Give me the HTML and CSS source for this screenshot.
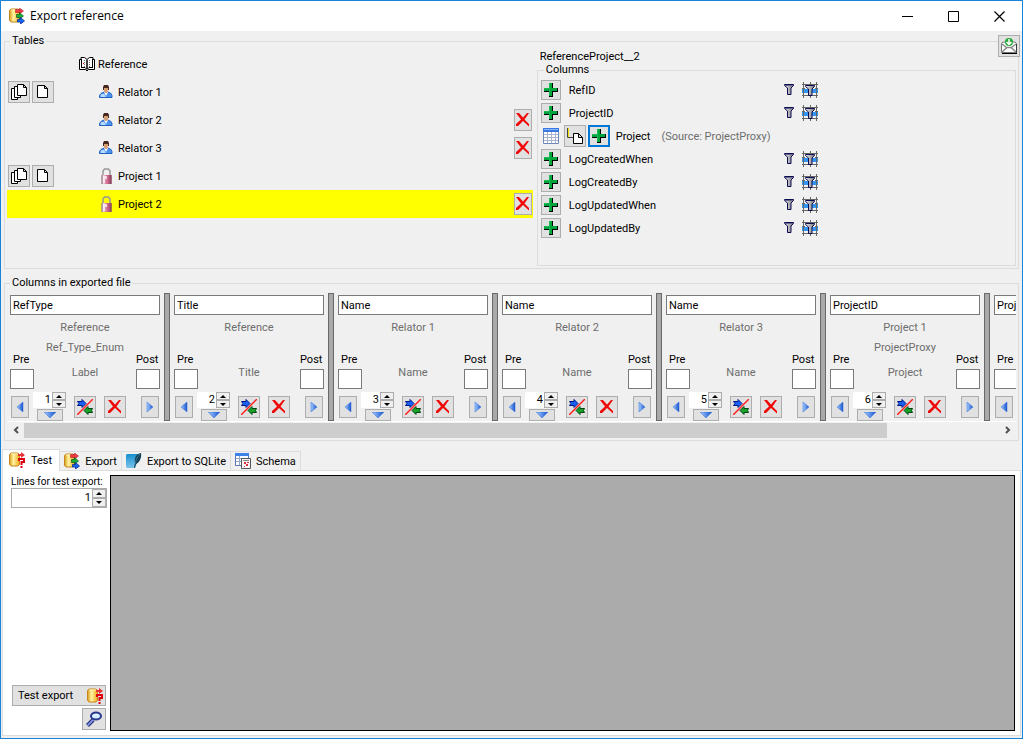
FILE: index.html
```html
<!DOCTYPE html>
<html lang="en">
<head>
	<meta charset="UTF-8">
	<meta name="viewport" content="width=device-width, initial-scale=1">
	<title>Export reference</title>
	<link rel="stylesheet" href="styles.css">
</head>
<body>
	<!-- icon set -->
	<svg class="sprite" width="0" height="0" aria-hidden="true">
		<defs>
			<linearGradient id="gold"><stop offset="0" stop-color="#d99a1c"/><stop offset=".4" stop-color="#fff3a0"/><stop offset="1" stop-color="#f0a818"/></linearGradient>
			<linearGradient id="blue"><stop offset="0" stop-color="#a8d0ff"/><stop offset="1" stop-color="#1450d0"/></linearGradient>
			<linearGradient id="steel"><stop offset="0" stop-color="#f4f4f4"/><stop offset="1" stop-color="#707078"/></linearGradient>
			<linearGradient id="pink"><stop offset="0" stop-color="#fff"/><stop offset=".5" stop-color="#d87898"/><stop offset="1" stop-color="#a03860"/></linearGradient>
			<linearGradient id="sky" x2="0" y2="1"><stop offset="0" stop-color="#168fce"/><stop offset="1" stop-color="#7cc4ee"/></linearGradient>
		</defs>
		<symbol id="export" viewBox="0 0 16 16">
			<path d="M.5 2.500 2 1h7l1.500 1.500v10L9 14H2L.5 12.500z" fill="url(#gold)" stroke="#c8871c"/>
			<path d="M2 2h7" stroke="#fff6b8"/>
			<path d="M6.500 1.500h4V0l4 3-4 3V4.500h-4z" fill="#f03840" stroke="#a01020" stroke-width=".5"/>
			<path d="M7.500 6.500h3V4.500l4 3.500-4 3V9.500h-3z" fill="#1cac38" stroke="#0a5c20" stroke-width=".7"/>
			<path d="M8.500 11.500h3v-2l4 3.500-4 3v-2h-3z" fill="#1668f0" stroke="#0a2c98" stroke-width=".8"/>
		</symbol>
		<symbol id="test" viewBox="0 0 16 16">
			<path d="M.5 2.500 2 1h7l1.500 1.500v10L9 14H2L.5 12.500z" fill="url(#gold)" stroke="#c8871c"/>
			<path d="M2 2h7" stroke="#fff6b8"/>
			<path d="M9 2h3V0l4 3-4 3V4H9z" fill="#e83038"/>
			<path d="M10 9V7h5v3h-2.500v3M12.500 14v2" fill="none" stroke="#e00010" stroke-width="2"/>
		</symbol>
		<symbol id="book" viewBox="0 0 16 16">
			<path d="M.5 3.500H2V1.500h3.500l2.500 2 2.500-2H14v2h1.500v10H9.500L8 15l-1.500-1.500h-6z" fill="#fff" stroke="#000"/>
			<path d="M2.500 3v9M13.500 3v9M2 11.500h4l2 2 2-2h4" fill="none" stroke="#000"/>
			<path d="M8 4v9" stroke="#000" stroke-width="1.500"/>
			<path d="M5.500 4v7M10.500 4v7" stroke="#777" stroke-dasharray="1 1"/>
			<path d="M4 7.500h1" stroke="#f00"/>
		</symbol>
		<symbol id="person" viewBox="0 0 16 16">
			<path d="M.5 13.500v-2l1.500-2 3-1.500h4l3 1.500 1 2v2z" fill="#4c94ee" stroke="#2460c0"/>
			<path d="M1.500 12l1-2h2.500l2 3H2z" fill="#b8dcff"/>
			<path d="M5 8h4l-2 4z" fill="#fff"/>
			<path d="M4 3l1-2h4l1 2v3H4z" fill="#48281c"/>
			<path d="M5 4h4v3L8 9H6L5 7z" fill="#d8a078"/>
		</symbol>
		<symbol id="lock" viewBox="0 0 16 16">
			<path d="M4 8V3l1.500-2h4L11 3v5" fill="none" stroke="#989898" stroke-width="1.500"/>
			<path d="M2.500 7h10v9h-9l-1-1z" fill="url(#pink)"/>
			<path d="M4 8h4v3H4zM4 11h2v4H4z" fill="#fff" opacity=".7"/>
			<path d="M3 7v9M12 7v9" stroke="#785060"/>
		</symbol>
		<symbol id="copy" viewBox="0 0 16 16">
			<path d="M.5 4.500h6v11h-6z" fill="#fff" stroke="#000"/>
			<path d="M3.500 2.500h6v11h-6z" fill="#fff" stroke="#000"/>
			<path d="M6.500.500h6l3 3v8h-9zM12.500.500v3h3" fill="#fff" stroke="#000"/>
		</symbol>
		<symbol id="page" viewBox="0 0 16 16">
			<path d="M2.500 1.500h7l3 3v9h-10zM9.500 1.500v3h3" fill="#fff" stroke="#000"/>
		</symbol>
		<symbol id="cross" viewBox="0 0 16 16">
			<path d="M1 1h3l4 4.500L12 1h2L9.500 7.500 14 12v2.500L8 9l-5 5H1v-2l5-4.500z" fill="#f00808"/>
		</symbol>
		<symbol id="plus" viewBox="0 0 16 16">
			<path d="M6 1h4v5h5v4h-5v5H6v-5H1V6h5z" fill="#000"/>
			<path d="M6 1h3v5h5v3H9v5H6V9H1V6h5z" fill="#00a63c"/>
			<path d="M6.500 13V1M1 6.500h5" stroke="#20b850"/>
		</symbol>
		<symbol id="filter" viewBox="0 0 10 12">
			<path d="M.5.5h9v1L7 4v6.500H3.500V4L.500 1.500z" fill="url(#steel)" stroke="#0c0c50"/>
			<path d="M1 1.500h8" stroke="#68688c"/>
		</symbol>
		<symbol id="filtergrid" viewBox="0 0 16 16">
			<path d="M0 7h16v4H0z" fill="#3494f4"/>
			<path d="M1.500 0v16M8.500 0v16M14.500 0v16M0 2.500h16M0 6.500h3M13 6.500h3M0 13.500h16" stroke="#666"/>
			<path d="M3.500 3.500h9v1L10 7v6.500H6.500V7L3.500 4.500z" fill="url(#steel)" stroke="#0c0c50"/>
		</symbol>
		<symbol id="table" viewBox="0 0 16 16">
			<path d="M.5.5h15v15H.500z" fill="#fff" stroke="#7088b8"/>
			<path d="M0 0h16v4H0z" fill="#3878e0"/>
			<path d="M1 1.500h14" stroke="#88b8ff"/>
			<path d="M1 6.500h14M1 9.500h14M1 12.500h14M4.500 4v11M8.500 4v11M12.500 4v11" stroke="#aab4cc"/>
		</symbol>
		<symbol id="branch" viewBox="0 0 16 16">
			<path d="M1.500 0v9" stroke="#f0e000"/>
			<path d="M.5 0v9.500H6" fill="none" stroke="#444"/>
			<path d="M6.500 5.500h5l4 4v6h-9zM11.500 5.500v4h4" fill="#fff" stroke="#000"/>
		</symbol>
		<symbol id="mail" viewBox="0 0 16 16">
			<path d="M.5 5.500 2 4h12l1.500 1.500v9H.500z" fill="#fff" stroke="#777"/>
			<path d="M.5 14.500 6 9.500h4l5.500 5M1 6l5 4M15 6l-5 4" fill="none" stroke="#888" stroke-width="1.500"/>
			<path d="M1 15.500h15V6" fill="none" stroke="#000"/>
			<circle cx="8" cy="4" r="4" fill="#28a838"/>
			<path d="M8 1v5M5.500 4 8 6.500 10.500 4" fill="none" stroke="#fff" stroke-width="1.500"/>
		</symbol>
		<symbol id="swap" viewBox="0 0 16 16">
			<path d="M.5 2.500H5V.500l4 4-4 4v-2H.500l1.500-2z" fill="#1860f8" stroke="#001880"/>
			<path d="M15.500 9.500H11v-2l-4 4 4 4v-2h4.500l-1-2z" fill="#18a028" stroke="#004810"/>
			<path d="M0 16 16 0" stroke="#ff2020" stroke-width="1.500"/>
		</symbol>
		<symbol id="left" viewBox="0 0 8 12"><path d="M7 1v10L1 6z" fill="url(#blue)" stroke="#3070d8" stroke-width=".5"/></symbol>
		<symbol id="right" viewBox="0 0 8 12"><path d="M1 1v10l6-5z" fill="url(#blue)" stroke="#3070d8" stroke-width=".5"/></symbol>
		<symbol id="down" viewBox="0 0 12 6"><path d="M0 0h12L6 6z" fill="url(#blue)" stroke="#3070d8" stroke-width=".5"/></symbol>
		<symbol id="feather" viewBox="0 0 16 16">
			<path d="M0 2 1 1h12l-3 12-2 2H1l-1-1z" fill="url(#sky)"/>
			<path d="M15 0c-5 1-7 5-6 10l-1 5h1l1-4c3-1 6-6 5-11z" fill="#124058"/>
			<path d="M14 1c-3 3-4 6-5 10" fill="none" stroke="#4c8cac" stroke-width=".7"/>
		</symbol>
		<symbol id="schema" viewBox="0 0 16 16">
			<path d="M.5.500h13v12H.500z" fill="#fff" stroke="#5878b8"/>
			<path d="M0 0h14v3H0z" fill="#3c80e8"/>
			<path d="M1 5.500h12M1 8.500h6M4.500 3v9" stroke="#98a8c8"/>
			<path d="M6.500 5.500h9v10h-9z" fill="#f4f4f4" stroke="#555"/>
			<path d="M8 7.500h6" stroke="#888"/>
			<path d="M9 9h2v2H9zM12 9h2v1h-2zM11 11h2v2h-2zM9 13h1v1H9z" fill="#e03040"/>
		</symbol>
		<symbol id="lens" viewBox="0 0 16 16">
			<path d="M7 9 1.500 14.500" stroke="#202868" stroke-width="4"/>
			<path d="M7 9 1.500 14.500" stroke="#8090e8" stroke-width="2"/>
			<ellipse cx="10" cy="5" rx="5" ry="3.500" fill="#d0ecff" stroke="#28388c" stroke-width="2"/>
			<path d="M7.500 5.500l2-2H12" fill="none" stroke="#fff"/>
		</symbol>
	</svg>

	<div class="window">
		<header class="titlebar">
			<svg class="icon"><use href="#export"/></svg>
			<h1>Export reference</h1>
			<button class="sys" aria-label="Minimize"><svg width="11" height="11"><path d="M0 5.500h11" stroke="#000"/></svg></button>
			<button class="sys" aria-label="Maximize"><svg width="11" height="11"><path d="M.5.500h10v10H.500z" fill="none" stroke="#000"/></svg></button>
			<button class="sys" aria-label="Close"><svg width="11" height="11"><path d="M.5.500l10 10M10.500.500l-10 10" stroke="#000" stroke-width="1.200"/></svg></button>
		</header>

		<main>
			<button class="btn feedback" aria-label="Send feedback"><svg class="icon"><use href="#mail"/></svg></button>

			<fieldset class="group tables">
				<legend>Tables</legend>
				<div class="split">
					<ul class="tree">
						<li>
							<div class="actions"></div>
							<div class="node"><svg class="icon"><use href="#book"/></svg><span>Reference</span></div>
						</li>
						<li>
							<div class="actions">
								<button class="btn" aria-label="Add multiple"><svg class="icon"><use href="#copy"/></svg></button>
								<button class="btn" aria-label="Add one"><svg class="icon"><use href="#page"/></svg></button>
							</div>
							<div class="node child"><svg class="icon"><use href="#person"/></svg><span>Relator 1</span></div>
						</li>
						<li>
							<div class="actions"></div>
							<div class="node child"><svg class="icon"><use href="#person"/></svg><span>Relator 2</span></div>
							<button class="btn thin" aria-label="Remove Relator 2"><svg class="icon"><use href="#cross"/></svg></button>
						</li>
						<li>
							<div class="actions"></div>
							<div class="node child"><svg class="icon"><use href="#person"/></svg><span>Relator 3</span></div>
							<button class="btn thin" aria-label="Remove Relator 3"><svg class="icon"><use href="#cross"/></svg></button>
						</li>
						<li>
							<div class="actions">
								<button class="btn" aria-label="Add multiple"><svg class="icon"><use href="#copy"/></svg></button>
								<button class="btn" aria-label="Add one"><svg class="icon"><use href="#page"/></svg></button>
							</div>
							<div class="node child"><svg class="icon"><use href="#lock"/></svg><span>Project 1</span></div>
						</li>
						<li class="selected">
							<div class="actions"></div>
							<div class="node child"><svg class="icon"><use href="#lock"/></svg><span>Project 2</span></div>
							<button class="btn thin" aria-label="Remove Project 2"><svg class="icon"><use href="#cross"/></svg></button>
						</li>
					</ul>

					<section class="details">
						<h2>ReferenceProject__2</h2>
						<fieldset class="group fields">
							<legend>Columns</legend>
							<ul id="fields"></ul>
						</fieldset>
					</section>
				</div>
			</fieldset>

			<fieldset class="group exported">
				<legend>Columns in exported file</legend>
				<div class="strip" id="strip"></div>
				<div class="scrollbar">
					<button aria-label="Scroll left"><svg width="6" height="8"><path d="M5 1 2 4l3 3" fill="none" stroke="#505050" stroke-width="2"/></svg></button>
					<div class="track"><div class="thumb"></div></div>
					<button aria-label="Scroll right"><svg width="6" height="8"><path d="M1 1l3 3-3 3" fill="none" stroke="#505050" stroke-width="2"/></svg></button>
				</div>
			</fieldset>

			<div class="tabs" role="tablist">
				<button class="tab active" role="tab" aria-selected="true"><svg class="icon"><use href="#test"/></svg><span>Test</span></button>
				<button class="tab" role="tab"><svg class="icon"><use href="#export"/></svg><span>Export</span></button>
				<button class="tab" role="tab"><svg class="icon"><use href="#feather"/></svg><span>Export to SQLite</span></button>
				<button class="tab" role="tab"><svg class="icon"><use href="#schema"/></svg><span>Schema</span></button>
			</div>
			<section class="tabpage" role="tabpanel">
				<div class="side">
					<label for="lines">Lines for test export:</label>
					<div class="number boxed">
						<input type="text" id="lines" value="1">
						<div class="spin"><button aria-label="More"></button><button class="dec" aria-label="Less"></button></div>
					</div>
					<button class="btn run">Test export<svg class="icon"><use href="#test"/></svg></button>
					<button class="btn look" aria-label="Show details"><svg class="icon"><use href="#lens"/></svg></button>
				</div>
				<div class="result"></div>
			</section>
		</main>
	</div>

	<!-- one row of the column list -->
	<template id="fieldRow">
		<li>
			<button class="btn add" aria-label="Add column"><svg class="icon"><use href="#plus"/></svg></button>
			<span class="name"></span>
			<button class="flat" aria-label="Filter"><svg width="10" height="12"><use href="#filter"/></svg></button>
			<button class="flat" aria-label="Filter in grid"><svg class="icon"><use href="#filtergrid"/></svg></button>
		</li>
	</template>
	<template id="linkedRow">
		<li class="linked">
			<svg class="icon"><use href="#table"/></svg>
			<button class="btn" aria-label="Add linked table"><svg class="icon"><use href="#branch"/></svg></button>
			<button class="btn focused" aria-label="Add linked column"><svg class="icon"><use href="#plus"/></svg></button>
			<span class="name"></span>
			<span class="source"></span>
		</li>
	</template>

	<!-- one column of the exported file -->
	<template id="column">
		<div class="column">
			<input type="text" class="heading" aria-label="Column heading">
			<div class="table-name"></div>
			<div class="middle">
				<label>Pre<input type="text"></label>
				<div class="origin"><span class="via"></span><span class="field"></span></div>
				<label>Post<input type="text"></label>
			</div>
			<div class="controls">
				<button class="btn narrow" aria-label="Move left"><svg width="8" height="12"><use href="#left"/></svg></button>
				<div class="order">
					<div class="number">
						<input type="text" class="position" aria-label="Position">
						<div class="spin"><button aria-label="Up"></button><button class="dec" aria-label="Down"></button></div>
					</div>
					<button class="btn flatdown" aria-label="Move to position"><svg width="12" height="6"><use href="#down"/></svg></button>
				</div>
				<button class="btn" aria-label="Transform"><svg class="icon"><use href="#swap"/></svg></button>
				<button class="btn" aria-label="Remove column"><svg class="icon"><use href="#cross"/></svg></button>
				<button class="btn narrow last" aria-label="Move right"><svg width="8" height="12"><use href="#right"/></svg></button>
			</div>
		</div>
		<div class="splitter"></div>
	</template>

<script>
var fields = [
	{name: "RefID"},
	{name: "ProjectID"},
	{name: "Project", source: "(Source: ProjectProxy)"},
	{name: "LogCreatedWhen"},
	{name: "LogCreatedBy"},
	{name: "LogUpdatedWhen"},
	{name: "LogUpdatedBy"}
];
var columns = [
	["RefType", "Reference", "Ref_Type_Enum", "Label"],
	["Title", "Reference", "", "Title"],
	["Name", "Relator 1", "", "Name"],
	["Name", "Relator 2", "", "Name"],
	["Name", "Relator 3", "", "Name"],
	["ProjectID", "Project 1", "ProjectProxy", "Project"],
	["Project", "", "", ""]
];

fields.forEach(function(f) {
	var row = document.getElementById(f.source ? "linkedRow" : "fieldRow").content.cloneNode(true);
	row.querySelector(".name").textContent = f.name;
	if (f.source) {
		row.querySelector(".source").textContent = f.source;
	}
	document.getElementById("fields").appendChild(row);
});

columns.forEach(function(c, i) {
	var col = document.getElementById("column").content.cloneNode(true);
	col.querySelector(".heading").value = c[0];
	col.querySelector(".table-name").textContent = c[1];
	col.querySelector(".via").textContent = c[2];
	col.querySelector(".field").textContent = c[3];
	col.querySelector(".position").value = i + 1;
	document.getElementById("strip").appendChild(col);
});
</script>
</body>
</html>
```

FILE: styles.css
```css
* {
	box-sizing: border-box;
}
body {
	margin: 0;
	font-family: Roboto, "Liberation Sans", Arial, sans-serif;
	font-size: 11px;
	line-height: 14px;
	color: #000;
}
button, input {
	font: inherit;
	color: inherit;
	margin: 0;
	padding: 0;
	border-radius: 0;
}
ul {
	list-style: none;
	margin: 0;
	padding: 0;
}
svg {
	display: block;
	flex: none;
}
.sprite {
	height: 0;
}
.icon {
	width: 16px;
	height: 16px;
}

/* window */
.window {
	display: flex;
	flex-direction: column;
	min-height: 100vh;
	background: #f0f0f0;
	border: 1px solid #1883d7;
}
.titlebar {
	display: flex;
	align-items: center;
	height: 30px;
	padding-left: 8px;
	background: #fff;
}
.titlebar h1 {
	flex: 1;
	margin: 0 0 0 5px;
	font: 12px/16px "Open Sans", sans-serif;
}
.sys {
	display: flex;
	align-items: center;
	justify-content: center;
	width: 46px;
	height: 30px;
	border: 0;
	background: none;
}
main {
	position: relative;
	flex: 1;
	display: flex;
	flex-direction: column;
	padding: 3px 3px 2px;
}
.btn {
	display: flex;
	align-items: center;
	justify-content: center;
	flex: none;
	width: 22px;
	height: 22px;
	background: #e1e1e1;
	border: 1px solid #adadad;
}
.feedback {
	position: absolute;
	top: 4px;
	right: 2px;
}

/* group boxes */
.group {
	min-width: 0;
	margin: 0;
	padding: 2px;
	border: 1px solid #dcdcdc;
}
.group legend {
	margin-left: 3px;
	padding: 0 2px;
}
.split {
	display: grid;
	grid-template-columns: 52.5% 1fr;
	min-height: 216px;
}

/* table tree */
.tree {
	margin-right: 4px;
}
.tree li {
	display: flex;
	align-items: center;
	height: 28px;
	padding: 0 1px;
}
.tree .selected {
	background: #ff0;
}
.actions {
	display: flex;
	gap: 2px;
	width: 71px;
}
.node {
	display: flex;
	align-items: center;
	flex: 1;
	gap: 3px;
}
.node span, .fields span, .tab span {
	padding-top: 2px;
}
.child {
	padding-left: 20px;
}
.thin {
	width: 18px;
}

/* column list */
.details {
	display: flex;
	flex-direction: column;
}
.details h2 {
	margin: 0 0 0 3px;
	font-size: 11px;
	font-weight: normal;
	line-height: 13px;
}
.fields {
	flex: 1;
	padding-left: 3px;
}
.fields li {
	display: grid;
	grid-template-columns: 20px 207px 10px 16px;
	gap: 8px;
	align-items: center;
	height: 22px;
	margin-bottom: 1px;
}
.fields .linked {
	display: flex;
	gap: 2px;
	padding-left: 2px;
}
.linked .icon {
	margin-right: 3px;
}
.linked .btn .icon {
	margin: 0;
}
.linked .name {
	margin: 0 9px 0 4px;
}
.add {
	width: 20px;
	height: 20px;
}
.focused {
	border: 2px solid #0078d7;
}
.flat {
	border: 0;
	background: none;
}
.source {
	color: #6d6d6d;
}

/* exported file */
.exported {
	margin-top: 7px;
	padding-top: 3px;
}
.strip {
	display: flex;
	gap: 4px;
	overflow: hidden;
	padding-left: 3px;
}
.column {
	flex: none;
	width: 150px;
	height: 128px;
	padding-top: 2px;
}
.splitter {
	flex: none;
	width: 6px;
	background: #a9a9a9;
	border: 1px solid #696969;
}
.column input {
	border: 1px solid #7a7a7a;
	background: #fff;
}
.column .heading {
	display: block;
	width: 100%;
	height: 20px;
	padding: 0 2px;
}
.table-name {
	height: 26px;
	line-height: 26px;
	text-align: center;
	color: #6d6d6d;
}
.middle {
	display: flex;
	height: 48px;
}
.middle label {
	display: flex;
	flex-direction: column;
	justify-content: flex-end;
	gap: 2px;
	width: 24px;
	text-indent: 3px;
}
.middle label:last-child {
	text-indent: 0;
}
.middle label input {
	width: 100%;
	height: 20px;
}
.origin {
	flex: 1;
	text-align: center;
	color: #6d6d6d;
}
.origin span {
	display: block;
	height: 24px;
}
.origin .field {
	height: 16px;
	line-height: 16px;
}
.controls {
	display: flex;
	padding: 3px 1px 0;
}
.controls > .btn {
	margin: 4px 8px 0 0;
}
.controls > .narrow {
	width: 18px;
	margin-right: 4px;
}
.controls > .last {
	margin: 4px 0 0 auto;
}
.order {
	width: 33px;
	margin-right: 8px;
}
.flatdown {
	width: 26px;
	height: 12px;
	margin: 1px 0 0 4px;
}

/* number box with spin buttons */
.number {
	display: flex;
	height: 16px;
	background: #fff;
}
.number input {
	flex: 1;
	min-width: 0;
	padding-right: 1px;
	border: 0;
	text-align: right;
}
.spin {
	display: flex;
	flex-direction: column;
	width: 14px;
}
.spin button {
	display: flex;
	align-items: center;
	justify-content: center;
	flex: 1;
	border: 1px solid #acacac;
	background: #f0f0f0;
}
.spin button::before {
	content: "";
	border: 3px solid transparent;
	border-top: 0;
	border-bottom-color: #000;
}
.spin .dec::before {
	border-top: 3px solid #000;
	border-bottom: 0;
}
.boxed {
	height: 20px;
	border: 1px solid #acacac;
}

.scrollbar {
	display: flex;
	height: 17px;
	border-top: 1px solid #fff;
}
.scrollbar button {
	display: flex;
	align-items: center;
	justify-content: center;
	width: 17px;
	border: 0;
	background: none;
}
.track {
	flex: 1;
}
.thumb {
	width: 88.5%;
	height: 15px;
	margin-top: 1px;
	background: #cdcdcd;
}

/* tabs */
.tabs {
	display: flex;
	align-items: flex-end;
	height: 21px;
	margin: 8px 0 0 -2px;
}
.tab {
	display: flex;
	align-items: center;
	gap: 5px;
	height: 19px;
	padding: 0 4px;
	border: 1px solid #dcdcdc;
	border-width: 1px 1px 0 0;
	background: #f0f0f0;
}
.tab.active {
	z-index: 1;
	height: 22px;
	margin-bottom: -1px;
	padding: 0 7px 1px 6px;
	gap: 6px;
	border-left-width: 1px;
	background: #fff;
}
.tabpage {
	display: flex;
	flex: 1;
	gap: 3px;
	margin: 0 -2px;
	padding: 4px 5px 4px 8px;
	border: 1px solid #dcdcdc;
	background: #fff;
}
.side {
	display: flex;
	flex-direction: column;
	width: 96px;
	padding-bottom: 1px;
}
.side label {
	font-size: 10px;
	line-height: 13px;
	white-space: nowrap;
}
.run {
	justify-content: space-between;
	width: 94px;
	height: 21px;
	margin: auto 0 2px 1px;
	padding: 0 2px 0 5px;
}
.look {
	width: 24px;
	margin-left: 71px;
}
.result {
	flex: 1;
	background: #ababab;
	border: 1px solid #000;
}
```
